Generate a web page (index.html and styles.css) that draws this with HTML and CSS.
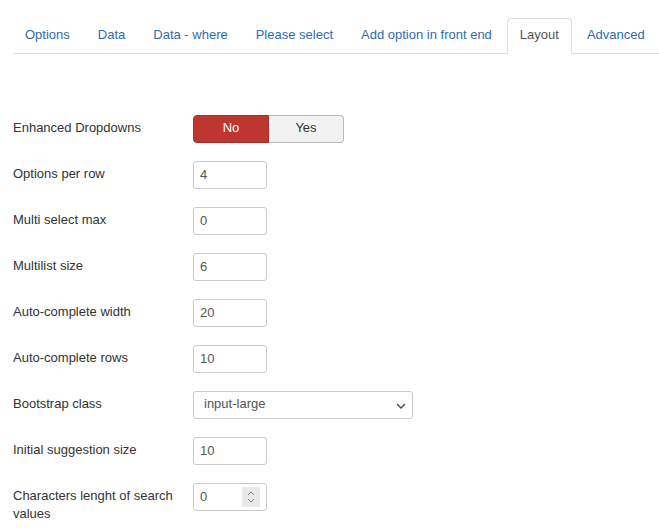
FILE: index.html
```html
<!DOCTYPE html>
<html>
<head>
<meta charset="utf-8">
<link rel="stylesheet" href="styles.css">
</head>
<body>
<div class="page">
  <ul class="tabs">
    <li><a>Options</a></li>
    <li><a>Data</a></li>
    <li><a>Data - where</a></li>
    <li><a>Please select</a></li>
    <li><a>Add option in front end</a></li>
    <li class="active"><a>Layout</a></li>
    <li><a>Advanced</a></li>
  </ul>
  <div class="form">
    <div class="group">
      <label class="lbl">Enhanced Dropdowns</label>
      <div class="ctl">
        <div class="btn-group">
          <span class="btn btn-no">No</span>
          <span class="btn btn-yes">Yes</span>
        </div>
      </div>
    </div>
    <div class="group">
      <label class="lbl">Options per row</label>
      <div class="ctl"><input class="inp" type="text" value="4"></div>
    </div>
    <div class="group">
      <label class="lbl">Multi select max</label>
      <div class="ctl"><input class="inp" type="text" value="0"></div>
    </div>
    <div class="group">
      <label class="lbl">Multilist size</label>
      <div class="ctl"><input class="inp" type="text" value="6"></div>
    </div>
    <div class="group">
      <label class="lbl">Auto-complete width</label>
      <div class="ctl"><input class="inp" type="text" value="20"></div>
    </div>
    <div class="group">
      <label class="lbl">Auto-complete rows</label>
      <div class="ctl"><input class="inp" type="text" value="10"></div>
    </div>
    <div class="group">
      <label class="lbl">Bootstrap class</label>
      <div class="ctl">
        <div class="select">
          <span class="select-val">input-large</span>
          <svg class="caret" width="10" height="6" viewBox="0 0 10 6"><path d="M1 1 L5 5 L9 1" fill="none" stroke="#444" stroke-width="1.3"/></svg>
        </div>
      </div>
    </div>
    <div class="group">
      <label class="lbl">Initial suggestion size</label>
      <div class="ctl"><input class="inp" type="text" value="10"></div>
    </div>
    <div class="group">
      <label class="lbl">Characters lenght of search values</label>
      <div class="ctl">
        <div class="num">
          <input class="inp" type="text" value="0">
          <span class="spin">
            <svg width="8" height="14" viewBox="0 0 8 14"><path d="M1 5 L4 2 L7 5" fill="none" stroke="#888" stroke-width="1"/><path d="M1 9 L4 12 L7 9" fill="none" stroke="#888" stroke-width="1"/></svg>
          </span>
        </div>
      </div>
    </div>
  </div>
</div>
</body>
</html>
```
FILE: styles.css
```css
html, body {
  margin: 0;
  padding: 0;
  background: #fff;
}
body {
  font-family: "Liberation Sans", Arial, sans-serif;
  font-size: 13px;
  line-height: 18px;
  color: #333;
  overflow: hidden;
}
.page {
  padding: 18px 0 0 13px;
}
.tabs {
  list-style: none;
  margin: 0;
  padding: 0;
  display: flex;
  flex-wrap: nowrap;
  border-bottom: 1px solid #ddd;
}
.tabs li {
  flex: none;
  white-space: nowrap;
  margin-right: 2px;
  margin-bottom: -1px;
}
.tabs li:first-child {
  margin-left: -1px;
}
.tabs a {
  display: block;
  padding: 7px 12px 9px;
  line-height: 18px;
  border: 1px solid transparent;
  border-radius: 4px 4px 0 0;
  color: #2f6cb0;
}
.tabs li.active a {
  color: #555;
  background: #fff;
  border-color: #ddd #ddd transparent #ddd;
}
.form {
  padding-top: 61px;
}
.group {
  display: flex;
  margin-bottom: 18px;
}
.lbl {
  width: 160px;
  margin-right: 20px;
  padding-top: 4px;
  line-height: 18px;
  flex: none;
}
.ctl {
  flex: 1;
}
.btn-group {
  display: flex;
}
.btn {
  display: block;
  box-sizing: border-box;
  height: 28px;
  line-height: 24px;
  text-align: center;
  font-size: 13px;
  border: 1px solid;
}
.btn-no {
  width: 76px;
  background: #bd362f;
  border-color: #a9302a;
  color: #fff;
  border-radius: 4px 0 0 4px;
}
.btn-yes {
  width: 75px;
  background: #f2f2f2;
  border-color: #b8b8b8;
  border-left: none;
  color: #333;
  border-radius: 0 4px 4px 0;
}
.inp {
  display: block;
  box-sizing: border-box;
  width: 74px;
  height: 28px;
  margin: 0;
  padding: 3px 6px 5px;
  border: 1px solid #ccc;
  border-radius: 3px;
  font-family: "Liberation Sans", Arial, sans-serif;
  font-size: 13px;
  line-height: 18px;
  color: #555;
  background: #fff;
}
.select {
  position: relative;
  box-sizing: border-box;
  width: 220px;
  height: 28px;
  padding: 3px 10px 5px;
  border: 1px solid #ccc;
  border-radius: 3px;
  color: #555;
}
.select-val {
  line-height: 18px;
}
.caret {
  position: absolute;
  right: 6px;
  top: 11px;
}
.num {
  position: relative;
  width: 74px;
}
.spin {
  position: absolute;
  top: 4px;
  left: 49px;
  width: 18px;
  height: 20px;
  background: #e9e9e9;
  display: flex;
  align-items: center;
  justify-content: center;
}
```
